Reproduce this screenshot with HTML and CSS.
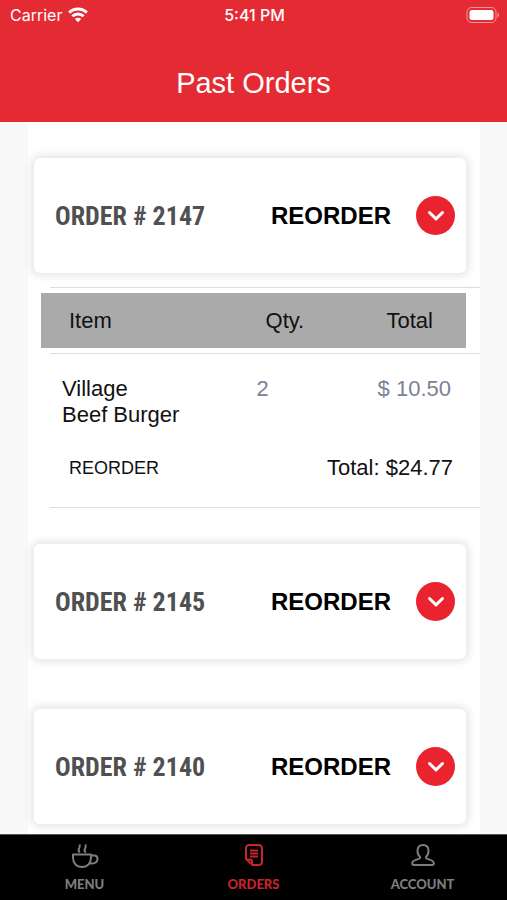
FILE: index.html
```html
<!DOCTYPE html>
<html lang="en">
<head>
<meta charset="utf-8">
<meta name="viewport" content="width=device-width, initial-scale=1">
<title>Past Orders</title>
<link rel="stylesheet" href="styles.css">
</head>
<body>
<header class="header">
  <div class="status">
    <div class="carrier">
      <span>Carrier</span>
      <svg class="wifi" viewBox="0 0 20 16" aria-hidden="true">
        <path d="M1.200 5.600a12.400 12.400 0 0 1 17.600 0M4.400 9.300a7.900 7.900 0 0 1 11.200 0" fill="none" stroke="#fff" stroke-width="3"/>
        <path d="M6.800 12a4.500 4.500 0 0 1 6.400 0L10 15.200z" fill="#fff"/>
      </svg>
    </div>
    <time class="clock">5:41 PM</time>
    <svg class="battery" viewBox="0 0 33 16" aria-hidden="true">
      <rect x="1" y="0.500" width="29" height="15" rx="4.500" fill="none" stroke="#fff" stroke-opacity="0.500"/>
      <rect x="3.500" y="3" width="24" height="10" rx="2.500" fill="#fff"/>
      <path d="M31.500 5.500c2 .8 2 4.200 0 5z" fill="#fff" fill-opacity="0.500"/>
    </svg>
  </div>
  <h1 class="title">Past Orders</h1>
</header>

<main class="orders">
  <section class="card">
    <h2 class="number">ORDER # 2147</h2>
    <button class="reorder" type="button">REORDER</button>
    <button class="toggle" type="button" aria-label="Hide order 2147" aria-expanded="true">
      <svg viewBox="0 0 18 12" aria-hidden="true"><path d="M2.500 2.500 9 8.800l6.500-6.300"/></svg>
    </button>
  </section>

  <table class="details">
    <thead>
      <tr><th>Item</th><th>Qty.</th><th>Total</th></tr>
    </thead>
    <tbody>
      <tr><td>Village<br>Beef Burger</td><td class="value">2</td><td class="value">$ 10.50</td></tr>
    </tbody>
    <tfoot>
      <tr><td><button class="again" type="button">REORDER</button></td><td>Total: $24.77</td></tr>
    </tfoot>
  </table>

  <section class="card">
    <h2 class="number">ORDER # 2145</h2>
    <button class="reorder" type="button">REORDER</button>
    <button class="toggle" type="button" aria-label="Show order 2145" aria-expanded="false">
      <svg viewBox="0 0 18 12" aria-hidden="true"><path d="M2.500 2.500 9 8.800l6.500-6.300"/></svg>
    </button>
  </section>

  <section class="card">
    <h2 class="number">ORDER # 2140</h2>
    <button class="reorder" type="button">REORDER</button>
    <button class="toggle" type="button" aria-label="Show order 2140" aria-expanded="false">
      <svg viewBox="0 0 18 12" aria-hidden="true"><path d="M2.500 2.500 9 8.800l6.500-6.300"/></svg>
    </button>
  </section>
</main>

<nav class="tabs">
  <a class="tab" href="#menu">
    <svg viewBox="0 0 28 26" aria-hidden="true">
      <path d="M2 11.500h18v3c0 5.500-3.500 9.500-9 9.500s-9-4-9-9.500zM20 12.500h3c2 0 3.500 1.200 3.500 3.400 0 3-2.500 5-7.500 4.600M8.800 9.500c-3.600-2.500 1.400-4.500-.3-8M14.800 9.500c-3.600-2.500 1.400-4.500-.3-8"/>
    </svg>
    <span>MENU</span>
  </a>
  <a class="tab active" href="#orders" aria-current="page">
    <svg viewBox="0 0 28 26" aria-hidden="true">
      <path d="M9.500 2h9q3.500 0 3.500 3.500v13q0 3.500-3.500 3.500h-6L6 16V5.500q0-3.500 3.500-3.500zM6.500 16.500h3.500q2 0 2 2V21.500"/>
      <path d="M10 7.500h8M10 10.500h8M10 13.500h8" stroke-width="2"/>
    </svg>
    <span>ORDERS</span>
  </a>
  <a class="tab" href="#account">
    <svg viewBox="0 0 28 26" aria-hidden="true">
      <path d="M14 2c-3.500 0-5.500 2.500-5.500 6 0 2.500 1 4.500 2.500 5.700v1.300c0 1.500-7.800 1.500-7.800 5 0 1.200.5 2 1.500 2h18.600c1 0 1.500-.8 1.500-2 0-3.500-7.800-3.500-7.800-5v-1.300c1.500-1.200 2.500-3.200 2.500-5.700 0-3.500-2-6-5.500-6z"/>
    </svg>
    <span>ACCOUNT</span>
  </a>
</nav>
</body>
</html>
```
FILE: styles.css
```css
* {
  box-sizing: border-box;
}

body {
  margin: 0;
  min-height: 100vh;
  display: flex;
  flex-direction: column;
  background: #f9f9f9;
  color: #111;
  font-family: "Liberation Sans", Arial, sans-serif;
  font-size: 22px;
  line-height: 26px;
}

button {
  border: 0;
  padding: 0;
  background: none;
  color: inherit;
  font: inherit;
  cursor: pointer;
}

.header {
  height: 122px;
  background: #e42b33;
  color: #fff;
}

.status {
  display: grid;
  grid-template-columns: 1fr auto 1fr;
  align-items: center;
  height: 30px;
  padding: 0 8px 0 10px;
  font-family: Inter, sans-serif;
  font-size: 16px;
  line-height: 20px;
}

.carrier {
  display: flex;
  align-items: center;
  gap: 6px;
}

.wifi {
  width: 20px;
  height: 16px;
}

.clock {
  font-weight: 500;
}

.battery {
  justify-self: end;
  width: 33px;
  height: 16px;
}

.title {
  margin: 36px 0 0;
  font-size: 29px;
  font-weight: 400;
  line-height: 34px;
  text-align: center;
}

.orders {
  flex: 1;
  margin: 0 27px 0 28px;
  padding: 36px 0 10px;
  background: #fff;
}

.card {
  display: flex;
  align-items: center;
  height: 115px;
  margin: 0 14px 0 6px;
  padding: 0 11px 0 21px;
  border-radius: 6px;
  background: #fff;
  box-shadow: 0 0 8px 3px rgba(0, 0, 0, 0.1);
}

.card + .card {
  margin-top: 50px;
}

.number {
  margin: 0 auto 0 0;
  color: #505050;
  font-family: "Roboto Condensed", Roboto, sans-serif;
  font-size: 26px;
  font-weight: 700;
}

.reorder {
  margin-right: 25px;
  color: #000;
  font-size: 24px;
  font-weight: 700;
}

.toggle {
  display: flex;
  align-items: center;
  justify-content: center;
  width: 39px;
  height: 39px;
  border-radius: 50%;
  background: #e9242f;
}

.toggle svg {
  width: 18px;
  height: 12px;
  fill: none;
  stroke: #fff;
  stroke-width: 3;
  stroke-linecap: round;
  stroke-linejoin: round;
}

.details,
.details thead,
.details tbody,
.details tfoot {
  display: block;
}

.details {
  margin: 14px 0 36px;
}

.details th,
.details td {
  padding: 0;
  font-weight: 400;
  text-align: left;
}

.details thead {
  padding: 6px 14px 6px 13px;
  background:
    linear-gradient(#ddd, #ddd) right top / calc(100% - 22px) 1px no-repeat,
    linear-gradient(#ddd, #ddd) right bottom / calc(100% - 22px) 1px no-repeat;
}

.details thead tr,
.details tbody tr {
  display: grid;
  grid-template-columns: 1fr 121px auto;
}

.details thead tr {
  align-items: center;
  height: 55px;
  padding: 0 33px 0 28px;
  background: #aaa;
}

.details tbody {
  padding: 22px 29px 0 34px;
}

.details .value {
  color: #7c8197;
}

.details tfoot {
  margin-left: 22px;
  padding: 27px 27px 26px 19px;
  border-bottom: 1px solid #ddd;
}

.details tfoot tr {
  display: flex;
  justify-content: space-between;
  align-items: center;
}

.again {
  display: block;
  font-size: 18px;
}

.tabs {
  position: sticky;
  bottom: 0;
  display: grid;
  grid-template-columns: repeat(3, 1fr);
  height: 66px;
  border-top: 1px solid #555;
  background: #000;
}

.tab {
  display: flex;
  flex-direction: column;
  align-items: center;
  gap: 7px;
  padding-top: 8px;
  color: #7d7d7d;
  font-family: Lato, sans-serif;
  font-size: 13px;
  font-weight: 900;
  line-height: 16px;
  text-decoration: none;
}

.tab svg {
  width: 28px;
  height: 26px;
  fill: none;
  stroke: currentColor;
  stroke-width: 2;
  stroke-linejoin: round;
}

.active {
  color: #c9242d;
}
```
